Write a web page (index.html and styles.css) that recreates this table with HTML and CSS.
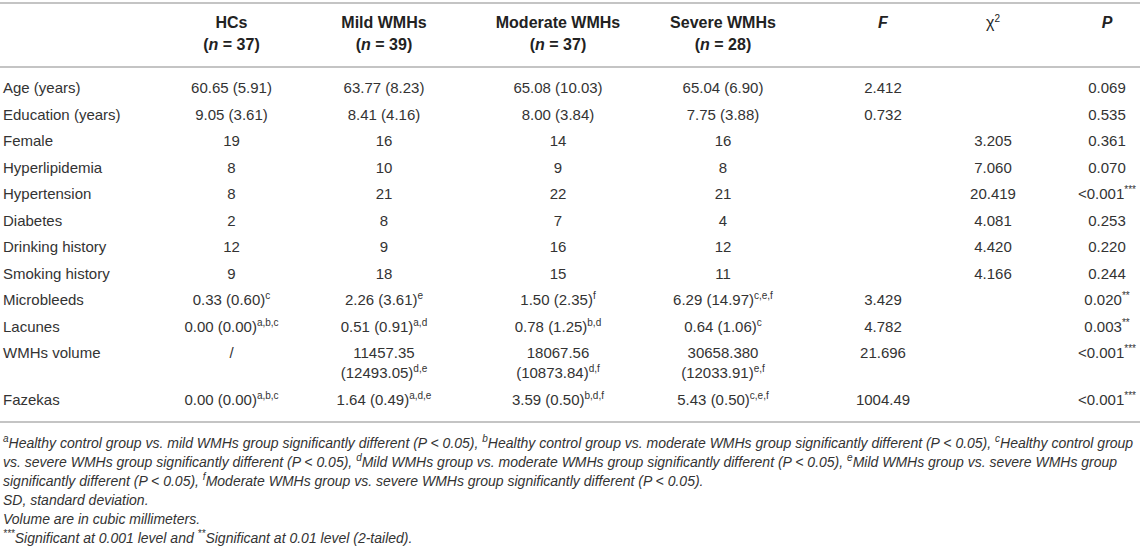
FILE: index.html
```html
<!DOCTYPE html>
<html lang="en">
<head>
    <meta charset="UTF-8">
    <title>Demographic and clinical characteristics</title>
    <link rel="stylesheet" href="styles.css">
</head>
<body>
    <div class="wrap">
        <table class="stats">
            <colgroup>
                <col class="c-label">
                <col class="c-hc">
                <col class="c-mild">
                <col class="c-mod">
                <col class="c-sev">
                <col class="c-f">
                <col class="c-chi">
                <col class="c-p">
            </colgroup>
            <thead>
                <tr>
                    <th></th>
                    <th>HCs<br>(<i>n</i> = 37)</th>
                    <th>Mild WMHs<br>(<i>n</i> = 39)</th>
                    <th>Moderate WMHs<br>(<i>n</i> = 37)</th>
                    <th>Severe WMHs<br>(<i>n</i> = 28)</th>
                    <th class="f"><i>F</i></th>
                    <th class="chi"><span class="chi-sym">χ<sup>2</sup></span></th>
                    <th class="p"><i>P</i></th>
                </tr>
            </thead>
            <tbody>
                <tr>
                    <td>Age (years)</td>
                    <td>60.65 (5.91)</td>
                    <td>63.77 (8.23)</td>
                    <td>65.08 (10.03)</td>
                    <td>65.04 (6.90)</td>
                    <td class="f">2.412</td>
                    <td class="chi"></td>
                    <td class="p">0.069</td>
                </tr>
                <tr>
                    <td>Education (years)</td>
                    <td>9.05 (3.61)</td>
                    <td>8.41 (4.16)</td>
                    <td>8.00 (3.84)</td>
                    <td>7.75 (3.88)</td>
                    <td class="f">0.732</td>
                    <td class="chi"></td>
                    <td class="p">0.535</td>
                </tr>
                <tr>
                    <td>Female</td>
                    <td>19</td>
                    <td>16</td>
                    <td>14</td>
                    <td>16</td>
                    <td class="f"></td>
                    <td class="chi">3.205</td>
                    <td class="p">0.361</td>
                </tr>
                <tr>
                    <td>Hyperlipidemia</td>
                    <td>8</td>
                    <td>10</td>
                    <td>9</td>
                    <td>8</td>
                    <td class="f"></td>
                    <td class="chi">7.060</td>
                    <td class="p">0.070</td>
                </tr>
                <tr>
                    <td>Hypertension</td>
                    <td>8</td>
                    <td>21</td>
                    <td>22</td>
                    <td>21</td>
                    <td class="f"></td>
                    <td class="chi">20.419</td>
                    <td class="p">&lt;0.001<sup>***</sup></td>
                </tr>
                <tr>
                    <td>Diabetes</td>
                    <td>2</td>
                    <td>8</td>
                    <td>7</td>
                    <td>4</td>
                    <td class="f"></td>
                    <td class="chi">4.081</td>
                    <td class="p">0.253</td>
                </tr>
                <tr>
                    <td>Drinking history</td>
                    <td>12</td>
                    <td>9</td>
                    <td>16</td>
                    <td>12</td>
                    <td class="f"></td>
                    <td class="chi">4.420</td>
                    <td class="p">0.220</td>
                </tr>
                <tr>
                    <td>Smoking history</td>
                    <td>9</td>
                    <td>18</td>
                    <td>15</td>
                    <td>11</td>
                    <td class="f"></td>
                    <td class="chi">4.166</td>
                    <td class="p">0.244</td>
                </tr>
                <tr>
                    <td>Microbleeds</td>
                    <td>0.33 (0.60)<sup>c</sup></td>
                    <td>2.26 (3.61)<sup>e</sup></td>
                    <td>1.50 (2.35)<sup>f</sup></td>
                    <td>6.29 (14.97)<sup>c,e,f</sup></td>
                    <td class="f">3.429</td>
                    <td class="chi"></td>
                    <td class="p">0.020<sup>**</sup></td>
                </tr>
                <tr>
                    <td>Lacunes</td>
                    <td>0.00 (0.00)<sup>a,b,c</sup></td>
                    <td>0.51 (0.91)<sup>a,d</sup></td>
                    <td>0.78 (1.25)<sup>b,d</sup></td>
                    <td>0.64 (1.06)<sup>c</sup></td>
                    <td class="f">4.782</td>
                    <td class="chi"></td>
                    <td class="p">0.003<sup>**</sup></td>
                </tr>
                <tr>
                    <td>WMHs volume</td>
                    <td>/</td>
                    <td>11457.35<br>(12493.05)<sup>d,e</sup></td>
                    <td>18067.56<br>(10873.84)<sup>d,f</sup></td>
                    <td>30658.380<br>(12033.91)<sup>e,f</sup></td>
                    <td class="f">21.696</td>
                    <td class="chi"></td>
                    <td class="p">&lt;0.001<sup>***</sup></td>
                </tr>
                <tr>
                    <td>Fazekas</td>
                    <td>0.00 (0.00)<sup>a,b,c</sup></td>
                    <td>1.64 (0.49)<sup>a,d,e</sup></td>
                    <td>3.59 (0.50)<sup>b,d,f</sup></td>
                    <td>5.43 (0.50)<sup>c,e,f</sup></td>
                    <td class="f">1004.49</td>
                    <td class="chi"></td>
                    <td class="p">&lt;0.001<sup>***</sup></td>
                </tr>
            </tbody>
        </table>

        <div class="notes">
            <p><sup>a</sup>Healthy control group vs. mild WMHs group significantly different (P &lt; 0.05), <sup>b</sup>Healthy control group vs. moderate WMHs group significantly different (P &lt; 0.05), <sup>c</sup>Healthy control group vs. severe WMHs group significantly different (P &lt; 0.05), <sup>d</sup>Mild WMHs group vs. moderate WMHs group significantly different (P &lt; 0.05), <sup>e</sup>Mild WMHs group vs. severe WMHs group significantly different (P &lt; 0.05), <sup>f</sup>Moderate WMHs group vs. severe WMHs group significantly different (P &lt; 0.05).</p>
            <p>SD, standard deviation.</p>
            <p>Volume are in cubic millimeters.</p>
            <p><sup>***</sup>Significant at 0.001 level and <sup>**</sup>Significant at 0.01 level (2-tailed).</p>
        </div>
    </div>
</body>
</html>
```

FILE: styles.css
```css
body {
    margin: 0;
    background-color: #fff;
    font-family: "Liberation Sans", Arial, sans-serif;
    color: #333;
}

.wrap {
    width: 1140px;
    padding-top: 2px;
}

.stats {
    width: 100%;
    border-collapse: collapse;
    table-layout: fixed;
    font-size: 15px;
    border-top: 2px solid #c4c4c4;
    border-bottom: 2px solid #c4c4c4;
}

.c-label { width: 155px; }
.c-hc { width: 153px; }
.c-mild { width: 152px; }
.c-mod { width: 196px; }
.c-sev { width: 134px; }
.c-f { width: 170px; }
.c-chi { width: 80px; }
.c-p { width: 100px; }

th {
    font-size: 16px;
    font-weight: bold;
    color: #222;
    text-align: center;
    vertical-align: top;
    line-height: 22px;
    padding: 8px 0 10px;
    border-bottom: 2px solid #c4c4c4;
}

td {
    text-align: center;
    vertical-align: top;
    line-height: 20px;
    padding: 3px 0 3.5px;
}

td:first-child {
    text-align: left;
    padding-left: 3px;
}

tbody tr:first-child td {
    padding-top: 10px;
}

tbody tr:last-child td {
    padding-bottom: 11px;
}

.f {
    padding-left: 16px;
}

.chi {
    padding-right: 14px;
}

.p {
    padding-left: 34px;
}

.chi-sym {
    font-weight: normal;
}

sup {
    font-size: 10px;
    line-height: 0;
    vertical-align: 6px;
}

.notes {
    padding: 11px 0 0 3px;
    font-size: 14px;
    font-style: italic;
    line-height: 19px;
}

.notes p {
    margin: 0;
}

.notes sup {
    font-size: 10px;
}
```
